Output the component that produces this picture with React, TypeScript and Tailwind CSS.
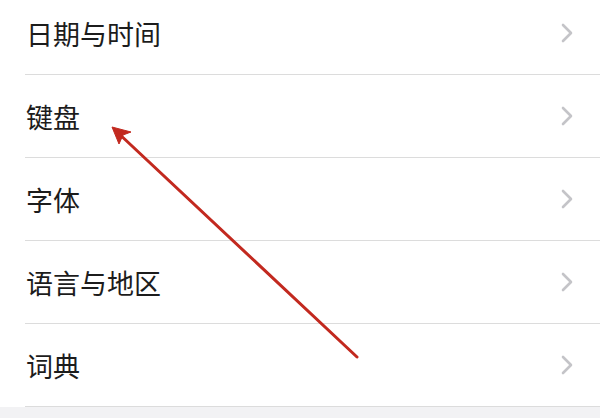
import React from "react";

const items = ["日期与时间", "键盘", "字体", "语言与地区", "词典"];

function Chevron() {
  return (
    <svg width="14" height="20" viewBox="0 0 14 20" fill="none">
      <path d="M3 2 L11 10 L3 18" stroke="#c4c4c8" strokeWidth="2.6" strokeLinecap="round" strokeLinejoin="round" />
    </svg>
  );
}

export default function App() {
  return (
    <div
      className="relative w-[600px] h-[418px] overflow-hidden bg-white"
      style={{ fontFamily: '"Noto Sans CJK SC", "Noto Sans", sans-serif' }}
    >
      <div className="flex flex-col -mt-[8px]">
        {items.map((label) => (
          <div key={label} className="flex h-[83px] items-center justify-between border-b border-[#dcdcdc] ml-[25px] pr-[26px]">
            <span className="text-[27px] leading-none text-[#1c1c1c] pt-[1px] pl-[1px]">{label}</span>
            <Chevron />
          </div>
        ))}
        <div className="h-[20px] bg-[#f2f2f4]" />
      </div>

      {/* red annotation arrow */}
      <svg className="absolute left-0 top-0 pointer-events-none" width="600" height="418" viewBox="0 0 600 418">
        <line x1="357" y1="357" x2="116" y2="131" stroke="#c2291f" strokeWidth="3" strokeLinecap="round" />
        <path d="M112 127 L131 132 L123 135 L119 144 Z" fill="#c2291f" stroke="#c2291f" strokeWidth="1" strokeLinejoin="round" />
      </svg>
    </div>
  );
}
